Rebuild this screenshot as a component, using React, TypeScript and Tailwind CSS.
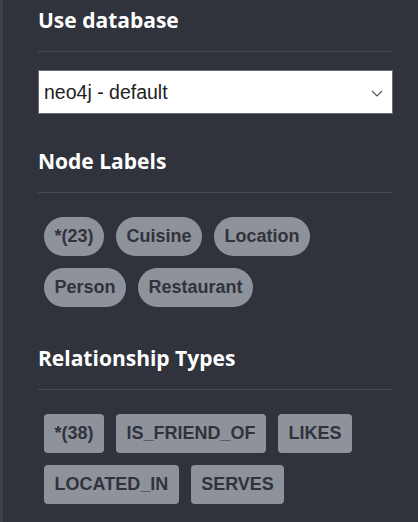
import React from "react";

const nodeLabels = ["*(23)", "Cuisine", "Location", "Person", "Restaurant"];
const relTypes = ["*(38)", "IS_FRIEND_OF", "LIKES", "LOCATED_IN", "SERVES"];

function Heading({ children, className = "" }: { children: React.ReactNode; className?: string }) {
  return (
    <div className={className}>
      <h3 className="text-[21px] leading-[28px] font-bold text-white" style={{ fontFamily: '"Open Sans", sans-serif' }}>
        {children}
      </h3>
      <div className="mt-[17px] h-px bg-[#474a53]" />
    </div>
  );
}

function Pill({ label, round }: { label: string; round: boolean }) {
  return (
    <span
      className={`flex h-[39px] items-center bg-[#8e929b] px-[10.5px] text-[18px] font-bold text-[#30333b] ${
        round ? "rounded-full" : "rounded-[4px]"
      }`}
      style={{ fontFamily: '"Liberation Sans", Arial, sans-serif' }}
    >
      {label}
    </span>
  );
}

export default function App() {
  return (
    <div className="flex h-[522px] w-[418px] overflow-hidden bg-[#30333c]">
      <div className="w-[3px] shrink-0 bg-[#3e414b]" />
      <div className="flex-1 pl-[35px] pr-[25px] pt-[6px]">
        <Heading>Use database</Heading>
        <div className="relative mt-[18px] flex h-[44px] items-center border border-[#6b6e76] bg-white pl-[5px] pt-[2px]">
          <span
            className="text-[19.5px] text-[#222]"
            style={{ fontFamily: '"Liberation Sans", Arial, sans-serif' }}
          >
            neo4j - default
          </span>
          <svg className="absolute right-[9px] top-[19px]" width="12" height="7" viewBox="0 0 12 7">
            <polyline points="1,1 6,6 11,1" fill="none" stroke="#555" strokeWidth="1.2" />
          </svg>
        </div>

        <Heading className="mt-[33px]">Node Labels</Heading>
        <div className="mt-[24px] flex flex-wrap gap-[12px] pl-[6px]">
          {nodeLabels.map((l) => (
            <Pill key={l} label={l} round />
          ))}
        </div>

        <Heading className="mt-[37px]">Relationship Types</Heading>
        <div className="mt-[24px] flex flex-wrap gap-[12px] pl-[6px]">
          {relTypes.map((l) => (
            <Pill key={l} label={l} round={false} />
          ))}
        </div>
      </div>
    </div>
  );
}
